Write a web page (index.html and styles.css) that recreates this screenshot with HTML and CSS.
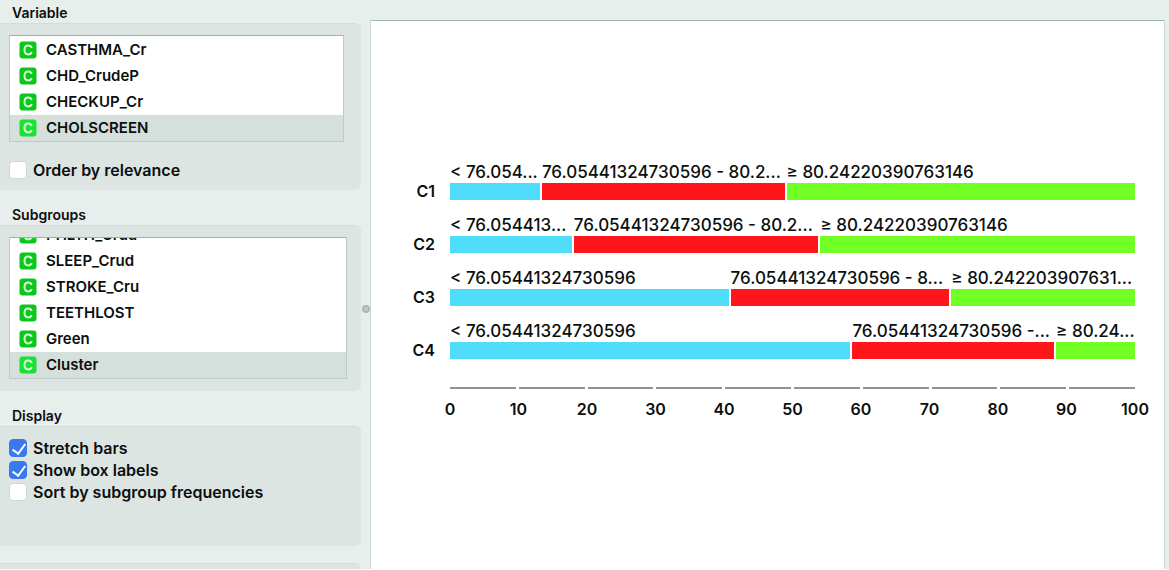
FILE: index.html
```html
<!DOCTYPE html>
<html lang="en">
<head>
<meta charset="utf-8">
<title>Box Plot</title>
<link rel="stylesheet" href="styles.css">
</head>
<body>
<svg class="defs" aria-hidden="true">
  <symbol id="cat" viewBox="0 0 18 18">
    <rect x="0.500" y="0.500" width="17" height="17" rx="3" fill="currentColor"/>
    <path d="M12.800 6.900C12.200 5.500 11 4.600 9.300 4.600C7 4.600 5.500 6.400 5.500 9S7 13.400 9.300 13.400C11 13.400 12.200 12.500 12.800 11.100" fill="none" stroke="#d8fbdc" stroke-width="2"/>
  </symbol>
</svg>
<div class="app">
  <aside class="sidebar">
    <section class="group">
      <h2 class="title" id="t-var">Variable</h2>
      <div class="panel panel-variable">
        <ul class="list" role="listbox" aria-labelledby="t-var">
          <li class="item" role="option"><svg class="icon"><use href="#cat"/></svg>CASTHMA_Cr</li>
          <li class="item" role="option"><svg class="icon"><use href="#cat"/></svg>CHD_CrudeP</li>
          <li class="item" role="option"><svg class="icon"><use href="#cat"/></svg>CHECKUP_Cr</li>
          <li class="item selected" role="option" aria-selected="true"><svg class="icon"><use href="#cat"/></svg>CHOLSCREEN</li>
        </ul>
        <label class="check"><input type="checkbox">Order by relevance</label>
      </div>
    </section>
    <section class="group">
      <h2 class="title" id="t-sub">Subgroups</h2>
      <div class="panel panel-subgroups">
        <ul class="list list-scrolled" role="listbox" aria-labelledby="t-sub">
          <li class="item" role="option"><svg class="icon"><use href="#cat"/></svg>PHLTH_Crud</li>
          <li class="item" role="option"><svg class="icon"><use href="#cat"/></svg>SLEEP_Crud</li>
          <li class="item" role="option"><svg class="icon"><use href="#cat"/></svg>STROKE_Cru</li>
          <li class="item" role="option"><svg class="icon"><use href="#cat"/></svg>TEETHLOST</li>
          <li class="item" role="option"><svg class="icon"><use href="#cat"/></svg>Green</li>
          <li class="item selected" role="option" aria-selected="true"><svg class="icon"><use href="#cat"/></svg>Cluster</li>
        </ul>
      </div>
    </section>
    <section class="group">
      <h2 class="title">Display</h2>
      <div class="panel panel-display">
        <label class="check"><input type="checkbox" checked>Stretch bars</label>
        <label class="check"><input type="checkbox" checked>Show box labels</label>
        <label class="check"><input type="checkbox">Sort by subgroup frequencies</label>
      </div>
    </section>
    <div class="panel panel-next"></div>
  </aside>
  <div class="splitter"><span class="handle"></span></div>
  <main class="chart">
    <div class="row">
      <span class="name">C1</span>
      <div class="bars">
        <div class="seg blue" style="flex-grow:90">&lt; 76.054...</div>
        <div class="seg red" style="flex-grow:243">76.05441324730596 - 80.2...</div>
        <div class="seg green" style="flex-grow:349">≥ 80.24220390763146</div>
      </div>
    </div>
    <div class="row">
      <span class="name">C2</span>
      <div class="bars">
        <div class="seg blue" style="flex-grow:122">&lt; 76.054413...</div>
        <div class="seg red" style="flex-grow:245">76.05441324730596 - 80.2...</div>
        <div class="seg green" style="flex-grow:315">≥ 80.24220390763146</div>
      </div>
    </div>
    <div class="row">
      <span class="name">C3</span>
      <div class="bars">
        <div class="seg blue" style="flex-grow:279">&lt; 76.05441324730596</div>
        <div class="seg red" style="flex-grow:219">76.05441324730596 - 8...</div>
        <div class="seg green" style="flex-grow:184">≥ 80.242203907631...</div>
      </div>
    </div>
    <div class="row">
      <span class="name">C4</span>
      <div class="bars">
        <div class="seg blue" style="flex-grow:401">&lt; 76.05441324730596</div>
        <div class="seg red" style="flex-grow:202">76.05441324730596 -...</div>
        <div class="seg green" style="flex-grow:79">≥ 80.24...</div>
      </div>
    </div>
    <div class="axis">
      <div class="line"><i></i><i></i><i></i><i></i><i></i><i></i><i></i><i></i><i></i><i></i></div>
      <div class="ticks"><span>0</span><span>10</span><span>20</span><span>30</span><span>40</span><span>50</span><span>60</span><span>70</span><span>80</span><span>90</span><span>100</span></div>
    </div>
  </main>
</div>
</body>
</html>
```
FILE: styles.css
```css
* { box-sizing: border-box; }
body {
  margin: 0;
  background: #fff;
  color: #0b0f0e;
  font: 600 16px/20px Inter, "Liberation Sans", sans-serif;
}
.defs { display: block; width: 0; height: 0; }
.app {
  display: flex;
  height: calc(100vh - 1px);
  overflow: hidden;
  background: #e8eeec;
}
.sidebar { flex: 0 0 361px; }
.title {
  margin: 0;
  padding: 3px 12px 0;
  height: 23px;
  font-size: 14px;
  font-weight: 600;
  line-height: 20px;
}
.group + .group .title { margin-top: 12px; }
.panel {
  padding: 11px 14px 0 9px;
  background: #dde5e2;
  border-top: 1px solid #d3dddb;
  border-radius: 0 6px 6px 0;
}
.panel-variable { height: 167px; padding-right: 17px; }
.panel-subgroups { height: 166px; }
.panel-display { height: 120px; padding-top: 10px; }
.panel-next { height: 20px; margin-top: 17px; }
.list {
  margin: 0;
  padding: 1px 0 0;
  list-style: none;
  background: #fff;
  border: 1px solid #bfcbca;
  border-top-color: #9fb0af;
  font-size: 15px;
}
.list-scrolled {
  display: flex;
  flex-direction: column;
  justify-content: flex-end;
  height: 142px;
  overflow: hidden;
}
.item {
  display: flex;
  flex: none;
  align-items: center;
  gap: 9px;
  height: 26px;
  padding-left: 9px;
}
.icon { width: 18px; height: 18px; color: #0cc61a; }
.selected { background: #d5dfdc; }
.selected .icon { color: #19e234; }
.check { display: flex; align-items: center; gap: 6px; height: 22px; }
.panel-variable .check { margin-top: 17px; }
.check input {
  appearance: none;
  flex: none;
  width: 18px;
  height: 18px;
  margin: 0;
  border: 1px solid #cdd7d8;
  border-radius: 4px;
  background: #fff;
}
.check input:checked {
  border-color: #3a78ee;
  background: #3a78ee;
}
.check input:checked::before {
  content: "";
  display: block;
  width: 6px;
  height: 11px;
  margin: 1px 0 0 5px;
  border: solid #fff;
  border-width: 0 2px 2px 0;
  transform: rotate(36deg);
}
.splitter {
  display: flex;
  flex: 0 0 9px;
  justify-content: center;
  align-items: center;
  padding-top: 48px;
}
.handle {
  flex: none;
  width: 8px;
  height: 8px;
  border: 2px solid #aab7b6;
  border-radius: 50%;
  background: #c3cdcc;
}
.chart {
  flex: 1;
  display: flex;
  flex-direction: column;
  gap: 13px;
  margin: 20px 4px 0 0;
  padding: 139px 29px 0 37px;
  background: #fff;
  border: 1px solid #c9d7d5;
  border-top: 1px solid #9db5b3;
  border-bottom: 0;
}
.row { display: flex; height: 39px; margin-top: 1px; align-items: flex-end; font-size: 17px; font-weight: 500; }
.name { width: 27px; text-align: right; line-height: 18px; font-size: 16px; font-weight: 600; }
.bars { display: flex; flex: 1; gap: 2px; margin-left: 15px; }
.seg { flex: 1 1 0; min-width: 0; white-space: nowrap; line-height: 22px; }
.seg::after { content: ""; display: block; height: 17px; }
.blue::after { background: #50dcfb; }
.red::after { background: #ff161a; }
.green::after { background: #72ff24; }
.axis { margin: 15px 0 0 42px; }
.line { display: flex; gap: 3px; }
.line i { flex: 1; height: 2px; background: #8b9795; }
.ticks { display: flex; justify-content: space-between; margin-top: 10px; }
.ticks span { display: flex; justify-content: center; width: 0; }
```
